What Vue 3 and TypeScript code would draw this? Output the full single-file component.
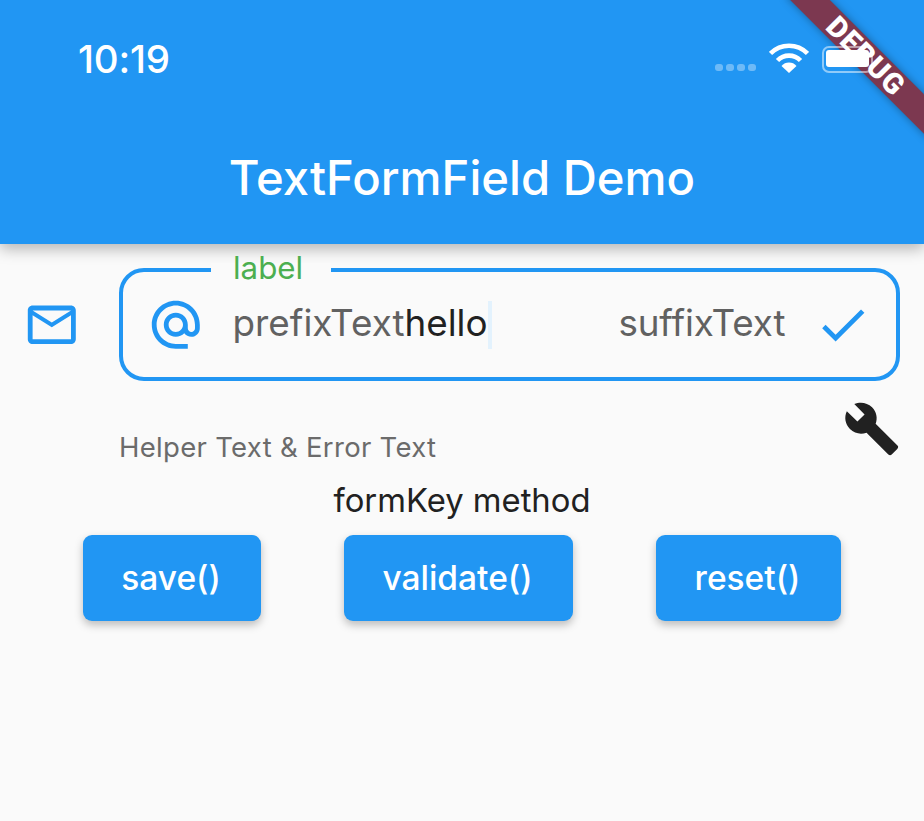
<script setup lang="ts">
const buttons: string[] = ['save()', 'validate()', 'reset()']
</script>

<template>
  <div class="screen">
    <header class="appbar">
      <div class="status">
        <span class="time">10:19</span>
        <div class="status-icons">
          <div class="dots"><i></i><i></i><i></i><i></i></div>
          <svg class="wifi" width="40" height="30" viewBox="0 0 40 30">
            <path d="M1.500 10.500 A26 26 0 0 1 38.500 10.500" fill="none" stroke="#fff" stroke-width="4.600" />
            <path d="M8.500 17.500 A16 16 0 0 1 31.500 17.500" fill="none" stroke="#fff" stroke-width="4.600" />
            <path d="M12.500 23 A10 10 0 0 1 27.500 23 L20 30 Z" fill="#fff" />
          </svg>
          <div class="battery"><div class="battery-fill"></div></div>
        </div>
      </div>
      <h1 class="title">TextFormField Demo</h1>
    </header>

    <main class="body">
      <div class="field-row">
        <svg class="icon mail" viewBox="0 0 24 24">
          <path d="M20 4H4c-1.100 0-2 .9-2 2v12c0 1.100.9 2 2 2h16c1.100 0 2-.9 2-2V6c0-1.100-.9-2-2-2zm0 14H4V8l8 5 8-5v10zm-8-7L4 6h16l-8 5z" />
        </svg>
        <div class="outline">
          <span class="label">label</span>
          <svg class="icon at" viewBox="0 0 24 24">
            <path d="M12 2C6.480 2 2 6.480 2 12s4.480 10 10 10h5v-2h-5c-4.340 0-8-3.660-8-8s3.660-8 8-8 8 3.660 8 8v1.430c0 .79-.71 1.570-1.500 1.570s-1.500-.78-1.500-1.570V12c0-2.760-2.240-5-5-5s-5 2.240-5 5 2.240 5 5 5c1.380 0 2.640-.56 3.540-1.470.65.89 1.770 1.470 2.960 1.470 1.970 0 3.500-1.600 3.500-3.570V12c0-5.520-4.480-10-10-10zm0 13c-1.660 0-3-1.340-3-3s1.340-3 3-3 3 1.340 3 3-1.340 3-3 3z" />
          </svg>
          <span class="prefix">prefixText</span><span class="value">hello</span><span class="caret"></span>
          <span class="spacer"></span>
          <span class="suffix">suffixText</span>
          <svg class="icon check" viewBox="0 0 24 24">
            <path d="M9 16.170L4.830 12l-1.420 1.410L9 19 21 7l-1.410-1.410z" />
          </svg>
        </div>
      </div>

      <div class="helper-row">
        <span class="helper">Helper Text &amp; Error Text</span>
        <svg class="icon wrench" viewBox="0 0 24 24">
          <path d="M22.700 19l-9.100-9.100c.9-2.300.4-5-1.500-6.900-2-2-5-2.400-7.400-1.300L9 6 6 9 1.600 4.700C.4 7.100.9 10.100 2.900 12.100c1.900 1.900 4.600 2.400 6.900 1.500l9.100 9.100c.4.4 1 .4 1.400 0l2.300-2.300c.5-.4.5-1.100.1-1.400z" />
        </svg>
      </div>

      <p class="method">formKey method</p>

      <div class="actions">
        <button v-for="b in buttons" :key="b" class="btn">{{ b }}</button>
      </div>
    </main>

    <div class="ribbon-clip">
      <div class="ribbon">DEBUG</div>
    </div>
  </div>
</template>

<style>
html, body { margin: 0; background: #fafafa; }
</style>

<style scoped>
.screen {
  position: relative;
  width: 924px;
  height: 821px;
  overflow: hidden;
  background: #fafafa;
  font-family: Inter, "Noto Sans", sans-serif;
}
.appbar {
  height: 244px;
  box-sizing: border-box;
  background: #2196f3;
  box-shadow: 0 5px 14px rgba(0, 0, 0, 0.28);
  color: #fff;
  position: relative;
}
.status {
  display: flex;
  justify-content: space-between;
  align-items: center;
  height: 44px;
  padding: 37px 51px 0 78px;
}
.time { font-size: 38.500px; font-weight: 500; letter-spacing: -0.2px; }
.status-icons { display: flex; align-items: center; }
.dots { display: flex; gap: 3px; margin-top: 17px; margin-right: 13px; }
.dots i { width: 8px; height: 7px; border-radius: 3px; background: rgba(255,255,255,0.35); }
.wifi { margin-right: 13px; margin-top: -2px; }
.battery {
  position: relative;
  z-index: 2;
  width: 51px; height: 27px; box-sizing: border-box;
  border: 2px solid rgba(255,255,255,0.5);
  border-radius: 7px; padding: 2px 2px 4px;
}
.battery-fill { height: 100%; background: #fff; border-radius: 3px; }
.title {
  margin: 0;
  padding-top: 70px;
  text-align: center;
  font-size: 47.250px;
  line-height: 54px;
  font-weight: 500;
}
.body { padding-top: 24px; }
.field-row { display: flex; align-items: center; padding: 0 24px 0 23px; }
.icon { flex: none; width: 57.600px; height: 57.600px; fill: #2196f3; }
.mail { margin-right: 38.400px; }
.outline {
  position: relative;
  flex: 1;
  height: 113px;
  box-sizing: border-box;
  border: 4px solid #2196f3;
  border-radius: 25px;
  display: flex;
  align-items: center;
  padding: 0 24px;
  font-size: 36.800px;
}
.label {
  position: absolute;
  left: 88px;
  top: -9px;
  padding: 0 28px 0 22px;
  background: #fafafa;
  color: #4caf50;
  font-size: 31.300px;
  line-height: 10px;
}
.at { margin-right: 28px; }
.prefix, .suffix, .value { position: relative; top: -2px; }
.prefix, .suffix { color: #616161; }
.suffix { letter-spacing: -0.1px; }
.value { color: #212121; }
.caret { width: 4px; height: 48px; background: #e3f2fd; }
.spacer { flex: 1; }
.check { margin-left: 29px; }
.helper-row {
  display: flex;
  justify-content: space-between;
  box-sizing: border-box;
  padding: 18.500px 23px 0 119px;
  height: 80px;
}
.helper { color: #6b6b6b; font-size: 27.500px; letter-spacing: 0.3px; line-height: 34px; margin-top: 30.500px; }
.wrench { fill: #212121; }
.method { margin: 19px 0 0; text-align: center; font-size: 32.800px; line-height: 40px; color: #212121; }
.actions { display: flex; padding: 15px 0 0 83px; }
.btn {
  height: 86px;
  border: none;
  border-radius: 9px;
  background: #2196f3;
  color: #fff;
  font-family: inherit;
  font-size: 33.500px;
  font-weight: 500;
  padding: 0 2px 0 0;
  box-shadow: 0 4px 8px rgba(0,0,0,0.25);
}
.btn:nth-child(1) { width: 178px; margin-right: 83px; }
.btn:nth-child(2) { width: 229px; margin-right: 83px; }
.btn:nth-child(3) { width: 185px; }
.ribbon-clip { position: absolute; inset: 0; overflow: hidden; pointer-events: none; }
.ribbon {
  position: absolute;
  left: 767px;
  top: 43px;
  width: 200px;
  height: 28px;
  box-sizing: border-box;
  padding-right: 3px;
  transform: rotate(45deg);
  background: rgba(140, 40, 50, 0.85);
  color: #fff;
  text-align: center;
  font-family: Roboto, sans-serif;
  font-size: 29px;
  letter-spacing: 1px;
  line-height: 28px;
  font-weight: 900;
  box-shadow: 0 0 8px rgba(0,0,0,0.35);
}
</style>
